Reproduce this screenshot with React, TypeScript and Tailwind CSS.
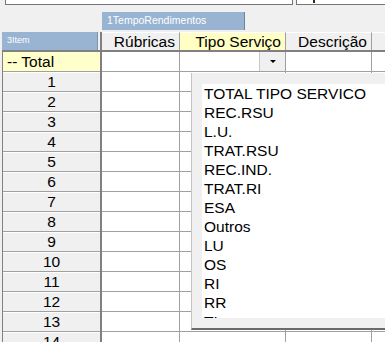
import React from 'react'

const ROWS = Array.from({ length: 14 }, (_, i) => i + 1)

const TIPOS = [
  'TOTAL TIPO SERVICO',
  'REC.RSU',
  'L.U.',
  'TRAT.RSU',
  'REC.IND.',
  'TRAT.RI',
  'ESA',
  'Outros',
  'LU',
  'OS',
  'RI',
  'RR',
  'TI',
]

/* ─── Cabeçalho de coluna ─────────────────────────────────── */
function HeadCell({ label, w, yellow }: { label?: string; w: string; yellow?: boolean }) {
  return (
    <div
      className={`${w} h-full shrink-0 flex items-center justify-end pr-[4px] border-r border-[#a0a0a0] border-t border-t-white text-[15.5px] leading-[18px] text-black ${
        yellow ? 'bg-[#ffffc4]' : 'bg-[#f0f0f0]'
      }`}
    >
      {label}
    </div>
  )
}

/* ─── Linha de dados ──────────────────────────────────────── */
function DataRow({ children }: { children?: React.ReactNode }) {
  return (
    <div className="flex h-[20px] border-b border-[#a0a0a0] bg-white">
      <div className="w-[78px] shrink-0 border-r border-[#a0a0a0]" />
      <div className="relative w-[106px] shrink-0 border-r border-[#a0a0a0]">{children}</div>
      <div className="w-[86px] shrink-0 border-r border-[#a0a0a0]" />
      <div className="flex-1" />
    </div>
  )
}

export default function App() {
  return (
    <div className="relative w-[385px] h-[342px] overflow-hidden bg-[#f0f0f0] font-['Liberation_Sans',Arial,sans-serif]">
      {/* Campos do topo (cortados) */}
      <div className="flex h-[5px]">
        <div className="ml-[5px] w-[288px] border-x border-b border-[#767676] bg-white" />
        <div className="relative ml-[3px] flex-1 border-l border-b border-[#767676] bg-white">
          <div className="absolute left-[16px] top-0 w-[2px] h-[3px] bg-[#3a2a10]" />
        </div>
      </div>

      <div className="mt-[7px] flex">
        {/* Coluna de itens */}
        <div className="w-[100px] shrink-0 pl-[2px] pt-[20px]">
          <div className="h-[20px] border-b-2 border-[#808080]">
            <div className="w-[96px] h-full bg-[#98b4d2] border-r border-[#7d93ab] pl-[5px] flex items-center text-[9px] text-white">
              3Item
            </div>
          </div>
          <div className="border-l border-[#808080]">
            <div className="h-[20px] bg-[#ffffcc] border-b border-[#a0a0a0] pl-[4px] flex items-center text-[15.5px] text-black">
              -- Total
            </div>
            {ROWS.map(n => (
              <div
                key={n}
                className="h-[20px] bg-[#f0f0f0] border-t border-t-white border-b border-[#a0a0a0] flex items-center justify-center text-[15.5px] text-black"
              >
                {n}
              </div>
            ))}
          </div>
        </div>

        {/* Grelha */}
        <div className="flex-1 flex flex-col">
          <div className="ml-[2px] mb-[2px] w-[143px] h-[18px] bg-[#98b4d2] border-r border-[#6f8299] pl-[5px] flex items-center text-[10.5px] text-white">
            1TempoRendimentos
          </div>
          <div className="border-l-2 border-[#808080]">
            <div className="flex h-[20px] border-b-2 border-[#808080]">
              <HeadCell w="w-[78px]" label="Rúbricas" />
              <HeadCell w="w-[106px]" label="Tipo Serviço" yellow />
              <HeadCell w="w-[86px]" label="Descrição" />
              <div className="flex-1 bg-[#f0f0f0] border-t border-t-white" />
            </div>
            <DataRow>
              <div className="absolute right-0 top-0 w-[26px] h-full bg-[#f0f0f0] border-l border-[#c8c8c8] flex items-center justify-center">
                <svg width="6" height="3" viewBox="0 0 6 3">
                  <path d="M0 0h6L3 3z" fill="#000" />
                </svg>
              </div>
            </DataRow>
            {ROWS.map(n => (
              <DataRow key={n} />
            ))}
          </div>
        </div>
      </div>

      {/* Lista suspensa */}
      <div className="absolute left-[191px] top-[73px] w-[200px] h-[257px] bg-[#f0f0f0] border-l border-[#c4c4c4] border-b-2 border-b-[#6a6a6a] pl-[10px] pt-[11px] pb-[10px]">
        <div className="h-full bg-white overflow-hidden pl-[2px]">
          {TIPOS.map(t => (
            <div key={t} className="h-[19px] leading-[19px] text-[15.5px] text-black whitespace-nowrap">
              {t}
            </div>
          ))}
        </div>
      </div>
    </div>
  )
}
